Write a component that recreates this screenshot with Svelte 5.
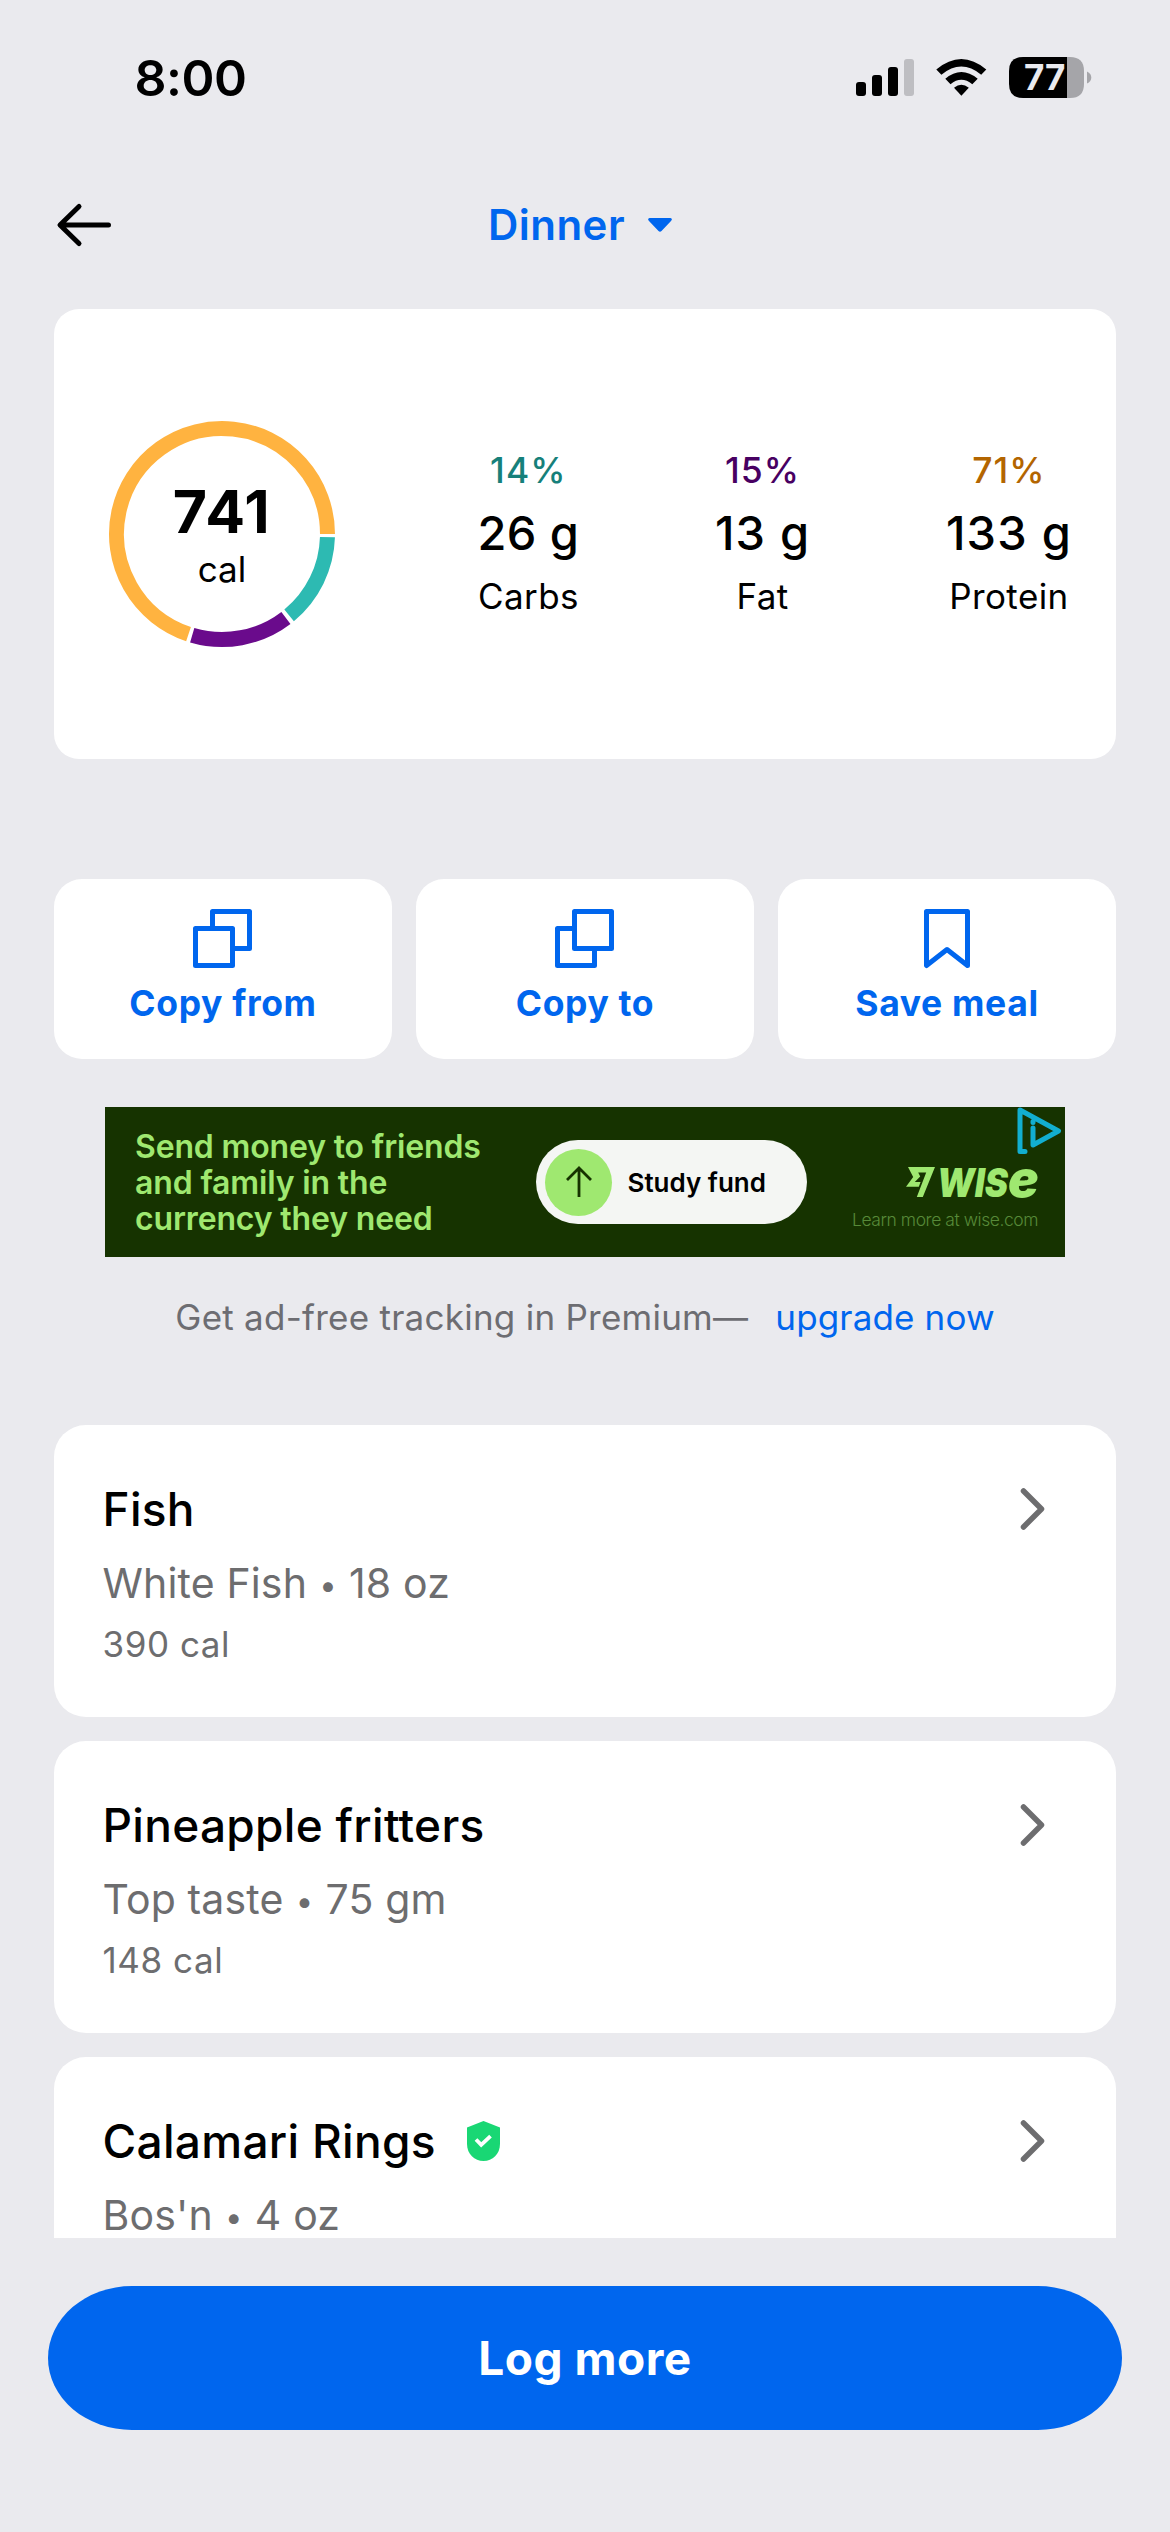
<script>
  const macros = [
    { name: 'Carbs', percent: '14%', grams: '26 g', tone: 'teal' },
    { name: 'Fat', percent: '15%', grams: '13 g', tone: 'purple' },
    { name: 'Protein', percent: '71%', grams: '133 g', tone: 'orange' }
  ];

  // Ring segments in degrees, clockwise from three o'clock
  const segments = [
    { from: 1.7, to: 50.5, color: '#2dbab2' },
    { from: 52.7, to: 106.4, color: '#6a0b8c' },
    { from: 108.5, to: 360, color: '#ffb340' }
  ];

  const foods = [
    { name: 'Fish', brand: 'White Fish', amount: '18 oz', calories: '390 cal', verified: false },
    { name: 'Pineapple fritters', brand: 'Top taste', amount: '75 gm', calories: '148 cal', verified: false },
    { name: 'Calamari Rings', brand: "Bos'n", amount: '4 oz', calories: '', verified: true }
  ];

  function arc({ from, to }) {
    const r = 105.5;
    const point = (deg) => {
      const a = (deg * Math.PI) / 180;
      return `${(113 + r * Math.cos(a)).toFixed(2)} ${(113 + r * Math.sin(a)).toFixed(2)}`;
    };
    return `M${point(from)}A${r} ${r} 0 ${to - from > 180 ? 1 : 0} 1 ${point(to)}`;
  }
</script>

<div class="screen">
  <div class="status">
    <span class="time">8:00</span>
    <svg width="236" height="60" viewBox="856 48 236 60">
      <rect x="856" y="82" width="10" height="14" rx="3" />
      <rect x="872" y="75" width="10" height="21" rx="3" />
      <rect x="888" y="67" width="10" height="29" rx="3" />
      <rect x="904" y="59" width="10" height="37" rx="3" fill="#bebec2" />
      <path d="M936.3 69.6Q961.3 48.6 986.3 69.6L981.2 74.8Q961.3 58.4 941.4 74.8Z" />
      <path d="M945.3 78.8Q961.3 65.4 977.7 78.8L972.3 84.2Q961.3 75.4 950.5 84.2Z" />
      <path d="M954 87.8Q961.3 81.6 968.8 87.8L961.4 95.8Z" />
      <path d="M1023 57H1067V98H1023Q1009 98 1009 84V71Q1009 57 1023 57Z" />
      <path d="M1067 57H1070Q1084 57 1084 71V84Q1084 98 1070 98H1067Z" fill="#a5a5a9" />
      <path d="M1087 71.5Q1091.3 73.5 1091.3 77.5T1087 83.5Z" fill="#a5a5a9" />
      <text class="level" x="1024" y="90">77</text>
    </svg>
  </div>

  <header>
    <svg class="back" width="60" height="48" viewBox="0 0 60 48">
      <path d="M25 5.5L6 24L25 42.5M7 24H54.5" />
    </svg>
    <div class="meal">
      <span>Dinner</span>
      <svg width="24" height="15" viewBox="0 0 24 15"><path d="M1.5 0H22.5Q25 .8 23 3L13.5 13Q12 14.6 10.5 13L1 3Q-1 .8 1.5 0Z" /></svg>
    </div>
  </header>

  <section class="summary">
    <div class="ring">
      <svg width="226" height="226" viewBox="0 0 226 226">
        {#each segments as segment}
          <path d={arc(segment)} stroke={segment.color} />
        {/each}
      </svg>
      <div class="total">
        <strong>741</strong>
        <span>cal</span>
      </div>
    </div>
    <div class="macros">
      {#each macros as macro}
        <div class="macro">
          <span class="percent {macro.tone}">{macro.percent}</span>
          <span class="grams {macro.tone}-grams">{macro.grams}</span>
          <span class="name">{macro.name}</span>
        </div>
      {/each}
    </div>
  </section>

  <div class="actions">
    <div class="action">
      <svg width="60" height="60" viewBox="0 0 60 60">
        <path d="M19.5 19V2.5H56.5V39.5H40M2.5 19.5H39.5V56.5H2.5Z" />
      </svg>
      <span>Copy from</span>
    </div>
    <div class="action">
      <svg width="60" height="60" viewBox="0 0 60 60">
        <path d="M19.5 2.5H56.5V39.5H19.5ZM17 19.5H2.5V56.5H39.5V42" />
      </svg>
      <span>Copy to</span>
    </div>
    <div class="action">
      <svg width="60" height="60" viewBox="0 0 60 60">
        <path d="M9.5 2.5H50.5V56.5L30 40.5L9.5 56.5Z" />
      </svg>
      <span>Save meal</span>
    </div>
  </div>

  <aside class="ad">
    <p class="pitch">Send money to friends<br />and family in the<br />currency they need</p>
    <div class="pill">
      <div class="disc">
        <svg width="28" height="32" viewBox="0 0 28 32"><path d="M14 31V2.5M2 14L14 2L26 14" /></svg>
      </div>
      <span>Study fund</span>
    </div>
    <div class="brand">
      <svg width="132" height="31" viewBox="0 0 132 31">
        <path d="M2 0H29L16.8 30H10.8L20.2 5.5H12.2L14.2 9.5L8.8 15H14.6L12.8 19.8H0L7.2 10Z" />
        <text y="29.7"><tspan class="caps" x="31" textLength="71" lengthAdjust="spacingAndGlyphs">WIS</tspan><tspan class="tail">e</tspan></text>
      </svg>
      <span>Learn more at wise.com</span>
    </div>
    <svg class="choices" width="45" height="48" viewBox="0 0 45 48">
      <path d="M8 44.5H3V3L41.5 24L16 38V21M16 14.5V15.5" />
    </svg>
  </aside>

  <div class="note">
    <span>Get ad-free tracking in Premium—</span>
    <span class="link">upgrade now</span>
  </div>

  <div class="foods">
    {#each foods as food}
      <article class="food">
        <div class="title">
          <span class="food-name">{food.name}</span>
          {#if food.verified}
            <svg width="33" height="40" viewBox="0 0 33 40">
              <path class="shield" d="M16.5 0L33 6.5V23C33 33 25.5 40 16.5 40S0 33 0 23V6.5Z" />
              <path class="tick" d="M9 18.5L14.2 23.8L23.5 15.2" />
            </svg>
          {/if}
          <svg class="chevron" width="26" height="44" viewBox="0 0 26 44">
            <path d="M3.5 4L21.5 22L3.5 40" />
          </svg>
        </div>
        <div class="detail">
          <span>{food.brand}</span><span class="dot">•</span><span>{food.amount}</span>
        </div>
        {#if food.calories}<div class="calories">{food.calories}</div>{/if}
      </article>
    {/each}
  </div>

  <button class="log">Log more</button>
</div>

<style>
  :global(body) {
    margin: 0;
    background: #eaeaee;
  }

  .screen {
    box-sizing: border-box;
    width: 1170px;
    height: 2532px;
    overflow: hidden;
    display: flex;
    flex-direction: column;
    background: #eaeaee;
    color: #000;
    font-family: Inter, 'Liberation Sans', sans-serif;
    white-space: nowrap;
  }

  svg {
    display: block;
    flex: none;
    overflow: visible;
  }

  .status {
    display: flex;
    align-items: center;
    justify-content: space-between;
    height: 60px;
    margin: 48px 78px 0 134.5px;
  }

  .time {
    font-size: 50px;
    font-weight: 600;
    line-height: 60px;
    letter-spacing: -0.5px;
  }

  .level {
    fill: #eaeaee;
    font-size: 35px;
    font-weight: 700;
  }

  header {
    display: grid;
    grid-template-columns: 1fr auto 1fr;
    align-items: center;
    height: 96px;
    margin: 69px 54px 0;
  }

  .back path {
    fill: none;
    stroke: #000;
    stroke-width: 5;
    stroke-linecap: round;
    stroke-linejoin: round;
  }

  .meal {
    display: flex;
    align-items: center;
    gap: 23px;
    padding-right: 10px;
    color: #0066ee;
    fill: #0066ee;
    font-size: 42px;
    font-weight: 600;
    line-height: 60px;
    letter-spacing: 0.5px;
  }

  .summary {
    box-sizing: border-box;
    display: flex;
    align-items: center;
    height: 450px;
    margin: 36px 54px 0;
    padding: 0 44px 0 55px;
    border-radius: 25px;
    background: #fff;
  }

  .ring {
    display: grid;
    place-items: center;
  }

  .ring > * {
    grid-area: 1 / 1;
  }

  .ring path {
    fill: none;
    stroke-width: 15;
  }

  .total {
    display: flex;
    flex-direction: column;
    align-items: center;
    padding-top: 6px;
    font-size: 35px;
    line-height: 50px;
  }

  .total strong {
    font-size: 59px;
    font-weight: 700;
    line-height: 64px;
    letter-spacing: 1.5px;
  }

  .macros {
    flex: 1;
    display: flex;
    justify-content: space-between;
    margin-left: 142.5px;
  }

  .macro {
    display: flex;
    flex-direction: column;
    align-items: center;
    gap: 7.5px;
    padding-bottom: 2px;
  }

  .percent {
    font-size: 35.5px;
    font-weight: 500;
    line-height: 50px;
    letter-spacing: 1.1px;
  }

  .teal { color: #16807a; }
  .purple { color: #480062; }
  .orange { color: #b36500; }

  .grams {
    font-size: 47px;
    font-weight: 500;
    line-height: 60px;
    letter-spacing: 1.2px;
  }

  .teal-grams {
    letter-spacing: 0.4px;
  }

  .name {
    font-size: 35px;
    line-height: 50px;
    letter-spacing: 0.4px;
  }

  .actions {
    display: grid;
    grid-template-columns: repeat(3, 1fr);
    gap: 24px;
    margin: 120px 54px 0;
  }

  .action {
    box-sizing: border-box;
    display: flex;
    flex-direction: column;
    align-items: center;
    gap: 12px;
    height: 180px;
    padding-top: 30px;
    border-radius: 28px;
    background: #fff;
    color: #0066ee;
    font-size: 35.5px;
    font-weight: 700;
    line-height: 46px;
    letter-spacing: 0.65px;
  }

  .action path {
    fill: none;
    stroke: #0066ee;
    stroke-width: 5;
    stroke-linejoin: round;
  }

  .ad {
    position: relative;
    box-sizing: border-box;
    display: flex;
    align-items: center;
    width: 960px;
    height: 150px;
    margin: 48px auto 0;
    padding: 0 27px 0 30px;
    background: #163300;
  }

  .pitch {
    width: 401px;
    margin: 2px 0 0;
    color: #9fe870;
    font-size: 32px;
    font-weight: 600;
    line-height: 36px;
    letter-spacing: -0.15px;
  }

  .pill {
    box-sizing: border-box;
    display: flex;
    align-items: center;
    gap: 15.5px;
    width: 271px;
    height: 84px;
    padding-left: 9px;
    border-radius: 42px;
    background: #f4f6f3;
    font-size: 26px;
    font-weight: 600;
  }

  .disc {
    display: grid;
    place-items: center;
    width: 67px;
    height: 67px;
    border-radius: 50%;
    background: #9fe870;
  }

  .disc path {
    fill: none;
    stroke: #163300;
    stroke-width: 2.8;
  }

  .brand {
    align-self: flex-start;
    display: flex;
    flex-direction: column;
    align-items: flex-end;
    gap: 11px;
    margin-left: auto;
    padding-top: 60px;
    color: #578a38;
    font-size: 17.5px;
    font-weight: 300;
    line-height: 22px;
    letter-spacing: -0.45px;
  }

  .brand svg {
    fill: #9fe870;
    font-weight: 900;
    font-style: italic;
  }

  .caps {
    font-size: 40px;
    letter-spacing: 0;
  }

  .tail {
    font-size: 51px;
    letter-spacing: 0;
  }

  .choices {
    position: absolute;
    top: 0;
    right: 3px;
  }

  .choices path {
    fill: none;
    stroke: #12aed0;
    stroke-width: 5;
    stroke-linejoin: round;
    stroke-linecap: round;
  }

  .note {
    display: flex;
    justify-content: center;
    gap: 27px;
    margin-top: 35px;
    color: #6d6d72;
    font-size: 35px;
    line-height: 50px;
    letter-spacing: 0.25px;
  }

  .link {
    color: #0066ee;
    letter-spacing: 0.15px;
  }

  .foods {
    display: flex;
    flex-direction: column;
    gap: 24px;
    height: 813px;
    margin: 83px 54px 0;
    overflow: hidden;
  }

  .food {
    box-sizing: border-box;
    flex: none;
    height: 292px;
    padding: 54px 70px 0 48.5px;
    border-radius: 32px;
    background: #fff;
    color: #6d6d6f;
  }

  .title {
    display: flex;
    align-items: center;
    gap: 31px;
    height: 60px;
  }

  .food-name {
    color: #000;
    font-size: 46px;
    font-weight: 500;
    line-height: 60px;
    letter-spacing: 0.3px;
  }

  .shield {
    fill: #19d774;
  }

  .tick {
    fill: none;
    stroke: #fff;
    stroke-width: 3.8;
  }

  .chevron {
    margin-left: auto;
  }

  .chevron path {
    fill: none;
    stroke: #6d6d6f;
    stroke-width: 5.5;
    stroke-linecap: round;
    stroke-linejoin: round;
  }

  .detail {
    display: flex;
    align-items: baseline;
    height: 50px;
    margin-top: 19px;
    font-size: 41px;
    line-height: 50px;
    letter-spacing: 0.15px;
  }

  .dot {
    width: 42px;
    padding-bottom: 3px;
    font-size: 31px;
    line-height: 40px;
    text-align: center;
    transform: translateY(-2px);
  }

  .calories {
    margin-top: 11px;
    font-size: 35px;
    line-height: 50px;
    letter-spacing: 0.55px;
  }

  .log {
    height: 144px;
    margin: 48px 48px 0;
    padding: 0;
    border: 0;
    border-radius: 84px / 72px;
    background: #0066ee;
    color: #fff;
    font-family: inherit;
    font-size: 46px;
    font-weight: 700;
    line-height: 60px;
    letter-spacing: 0.5px;
  }
</style>
